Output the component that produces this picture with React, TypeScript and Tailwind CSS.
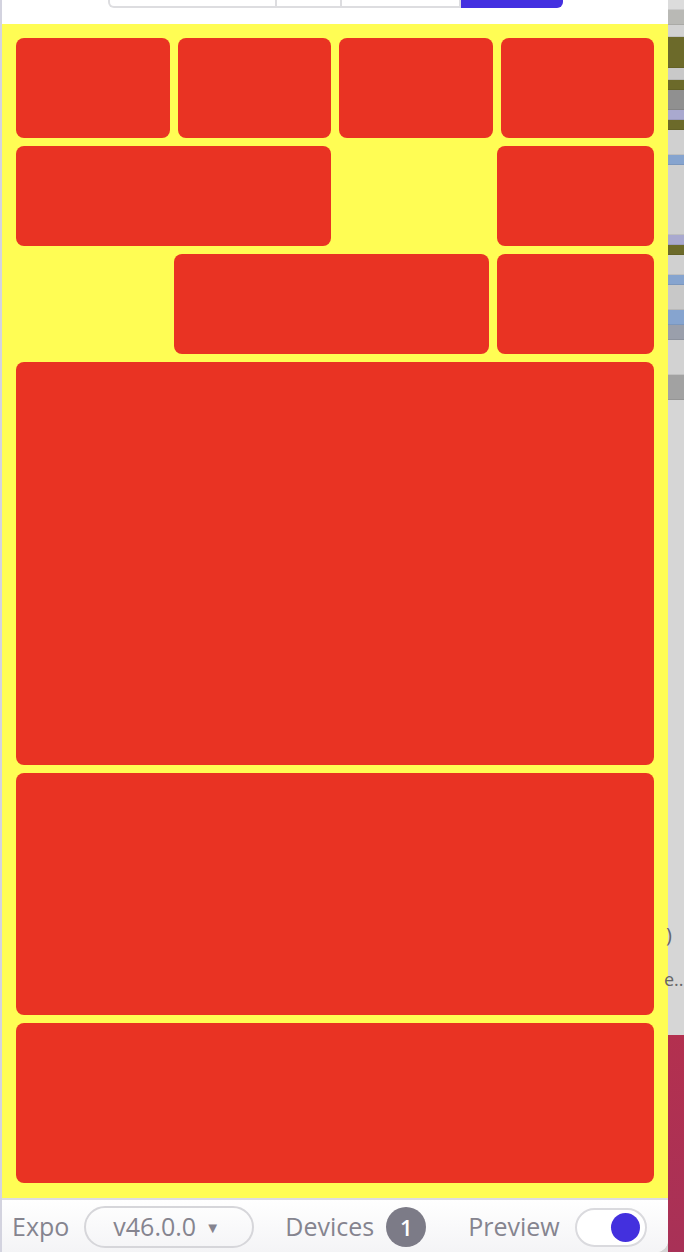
const font = { fontFamily: '"Open Sans", "Noto Sans", sans-serif' }

const bands: [number, string][] = [
  [10, 'bg-[#dcdcdc]'],
  [15, 'bg-[#b9b9b5]'],
  [12, 'bg-[#d2d2d2]'],
  [31, 'bg-[#6c6a2a]'],
  [12, 'bg-[#c9c9c9]'],
  [10, 'bg-[#6c6a2a]'],
  [20, 'bg-[#909090]'],
  [10, 'bg-[#a9a9cf]'],
  [10, 'bg-[#6c6a2a]'],
  [25, 'bg-[#d0d0d0]'],
  [10, 'bg-[#86a4cf]'],
  [70, 'bg-[#cfcfcf]'],
  [10, 'bg-[#a9a9cf]'],
  [10, 'bg-[#6c6a2a]'],
  [20, 'bg-[#d0d0d0]'],
  [10, 'bg-[#86a4cf]'],
  [25, 'bg-[#c8c8c8]'],
  [15, 'bg-[#86a4cf]'],
  [15, 'bg-[#9a9fab]'],
  [35, 'bg-[#d2d2d2]'],
  [25, 'bg-[#a2a2a2]'],
]

const Box = ({ className }: { className: string }) => (
  <div className={`rounded-lg bg-[#e93323] ${className}`} />
)

export default function App() {
  return (
    <div className="flex h-[1252px] w-[684px] overflow-hidden bg-[#d4d4d4]" style={font}>
      <div className="flex w-[668px] flex-col border-l-2 border-[#d3d3df] bg-white rounded-br-[12px] overflow-hidden">
        <div className="flex h-[24px] items-start pl-[106px]">
          <div className="flex h-[8px] w-[353px] rounded-bl-md border-2 border-t-0 border-[#dddde0]">
            <div className="w-[167px] border-r-2 border-[#dddde0]" />
            <div className="w-[65px] border-r-2 border-[#dddde0]" />
          </div>
          <div className="h-[8px] w-[102px] rounded-br-md bg-[#4430e0]" />
        </div>

        <div className="flex h-[1174px] flex-col gap-2 bg-[#fffd54] p-[14px]">
          <div className="grid h-[100px] grid-cols-4 gap-2">
            <Box className="" />
            <Box className="" />
            <Box className="" />
            <Box className="" />
          </div>
          <div className="flex h-[100px] justify-between">
            <Box className="w-[315px]" />
            <Box className="w-[157px]" />
          </div>
          <div className="flex h-[100px] justify-end gap-2">
            <Box className="w-[315px]" />
            <Box className="w-[157px]" />
          </div>
          <Box className="h-[403px]" />
          <Box className="h-[242px]" />
          <Box className="h-[160px]" />
        </div>

        <div className="flex flex-1 items-center border-t-2 border-[#dcdce2] bg-gradient-to-b from-white to-[#f4f4f6] pl-[10px] pt-[2px] text-[25px] text-[#85848f]">
          <span>Expo</span>
          <div className="ml-[15px] flex h-[42px] w-[170px] items-center rounded-full border-2 border-[#d6d6da] pl-[27px]">
            <span>v46.0.0</span>
            <span className="ml-[9px] text-[15px]">▼</span>
          </div>
          <span className="ml-[31px]">Devices</span>
          <div className="ml-[12px] flex h-[40px] w-[40px] items-center justify-center rounded-full bg-[#7c7b87] text-[22px] font-semibold text-white">
            1
          </div>
          <span className="ml-[42px]">Preview</span>
          <div className="ml-[15px] flex h-[39px] w-[72px] items-center justify-end rounded-full border-2 border-[#dadade] bg-white pr-[5px]">
            <div className="h-[29px] w-[29px] rounded-full bg-[#4330de]" />
          </div>
        </div>
      </div>

      <div className="flex w-[16px] flex-col">
        {bands.map(([h, c], i) => (
          <div key={i} className={`${c} border-b border-[#00000014]`} style={{ height: h }} />
        ))}
        <div className="flex h-[635px] flex-col bg-[#d6d6d6] text-[#666] text-[20px] leading-none">
          <span className="mt-[525px] -ml-[2px]">)</span>
          <span className="mt-[25px] -ml-[4px] text-[18px]">e...</span>
        </div>
        <div className="flex-1 bg-gradient-to-b from-[#b3304f] to-[#a83157]" />
      </div>
    </div>
  )
}
